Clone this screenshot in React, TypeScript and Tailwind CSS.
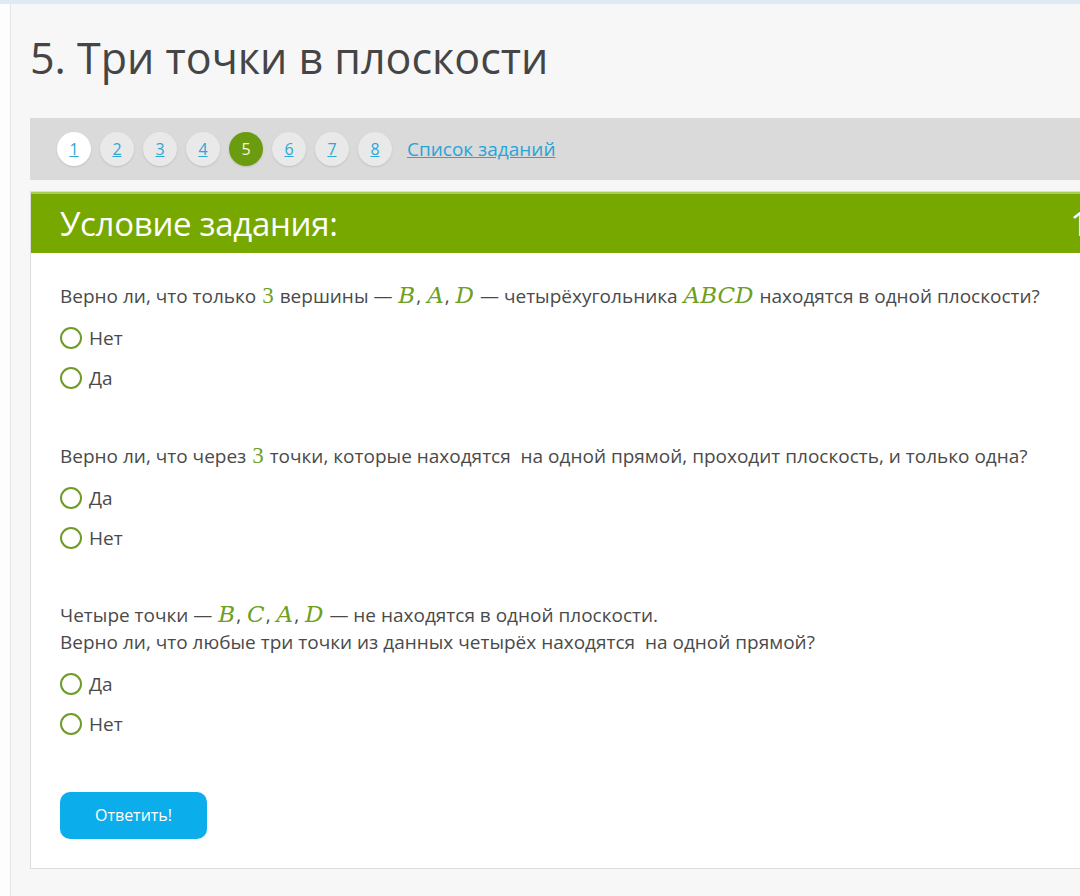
import React from "react";

const M = ({ children, italic = true }: { children: React.ReactNode; italic?: boolean }) => (
  <span
    className={`text-[#6f9f22] leading-none ${italic ? "italic text-[23px] px-[1px]" : "text-[23px] px-[1px]"}`}
    style={{
      fontFamily: italic
        ? '"DejaVu Serif", "Liberation Serif", serif'
        : '"Liberation Serif", "DejaVu Serif", serif',
    }}
  >
    {children}
  </span>
);

const Radio = ({ label }: { label: string }) => (
  <div className="flex items-center h-[40px]">
    <span className="w-[22px] h-[22px] rounded-full border-2 border-[#6e9c27] bg-white shrink-0" />
    <span className="ml-[7px] text-[19px] text-[#4a4a4a]">{label}</span>
  </div>
);

export default function App() {
  const nums = [1, 2, 3, 4, 5, 6, 7, 8];
  return (
    <div
      className="w-[1080px] h-[896px] overflow-hidden bg-[#f7f7f7] flex flex-col"
      style={{ fontFamily: '"Open Sans", "Noto Sans", sans-serif' }}
    >
      <div className="h-[4px] bg-[#e0eaf4] shrink-0" />
      <div className="flex flex-1 min-h-0">
        <div className="w-[11px] bg-[#fdfdfd] border-r border-[#e4e4ea] shrink-0" />
        <div className="flex-1 pl-[19px] pt-[28px] min-w-0">
          <h1 className="text-[43px] leading-[52px] text-[#454545] font-normal whitespace-nowrap">
            5. Три точки в плоскости
          </h1>
          <div className="mt-[34px] h-[62px] bg-[#dadada] w-[1100px] flex items-center pl-[27px]">
            <div className="flex items-center gap-[9px]">
              {nums.map((n) => (
                <span
                  key={n}
                  className={`w-[34px] h-[34px] rounded-full flex items-center justify-center text-[16px] shadow-[0_1px_2px_rgba(0,0,0,0.12)] ${
                    n === 5
                      ? "bg-[#6b9c10] text-[#f4f9d8]"
                      : n === 1
                      ? "bg-white text-[#2ea6d6] underline"
                      : "bg-[#e9e9e9] text-[#2ea6d6] underline"
                  }`}
                >
                  {n}
                </span>
              ))}
            </div>
            <span className="ml-[15px] text-[19px] text-[#2aa3d6] underline">Список заданий</span>
          </div>
          <div className="mt-[11px] w-[1100px] border border-[#dcdcdc] bg-white">
            <div className="h-[61px] bg-[#76a800] border-t-2 border-[#a9cc55] flex items-center justify-between pl-[29px] pr-[40px]">
              <span className="text-[33px] text-white tracking-[-0.3px]">Условие задания:</span>
              <span className="text-[33px] text-white">1</span>
            </div>
            <div className="pl-[29px] pt-[30px] pb-[29px] text-[19px] text-[#4a4a4a] leading-[27px]">
              <div className="whitespace-nowrap">
                Верно ли, что только <M italic={false}>3</M> вершины — <M>B</M>, <M>A</M>, <M>D</M> — четырёхугольника{" "}
                <M>ABCD</M> находятся в одной плоскости?
              </div>
              <div className="mt-[8px]">
                <Radio label="Нет" />
                <Radio label="Да" />
              </div>
              <div className="mt-[45px] whitespace-nowrap">
                Верно ли, что через <M italic={false}>3</M> точки, которые находятся&nbsp; на одной прямой, проходит
                плоскость, и только одна?
              </div>
              <div className="mt-[8px]">
                <Radio label="Да" />
                <Radio label="Нет" />
              </div>
              <div className="mt-[44px] whitespace-nowrap">
                <div>
                  Четыре точки — <M>B</M>, <M>C</M>, <M>A</M>, <M>D</M> — не находятся в одной плоскости.
                </div>
                <div>Верно ли, что любые три точки из данных четырёх находятся&nbsp; на одной прямой?</div>
              </div>
              <div className="mt-[8px]">
                <Radio label="Да" />
                <Radio label="Нет" />
              </div>
              <button className="mt-[48px] w-[147px] h-[47px] rounded-[10px] bg-[#0cadeb] text-white text-[16px]">
                Ответить!
              </button>
            </div>
          </div>
        </div>
      </div>
    </div>
  );
}
